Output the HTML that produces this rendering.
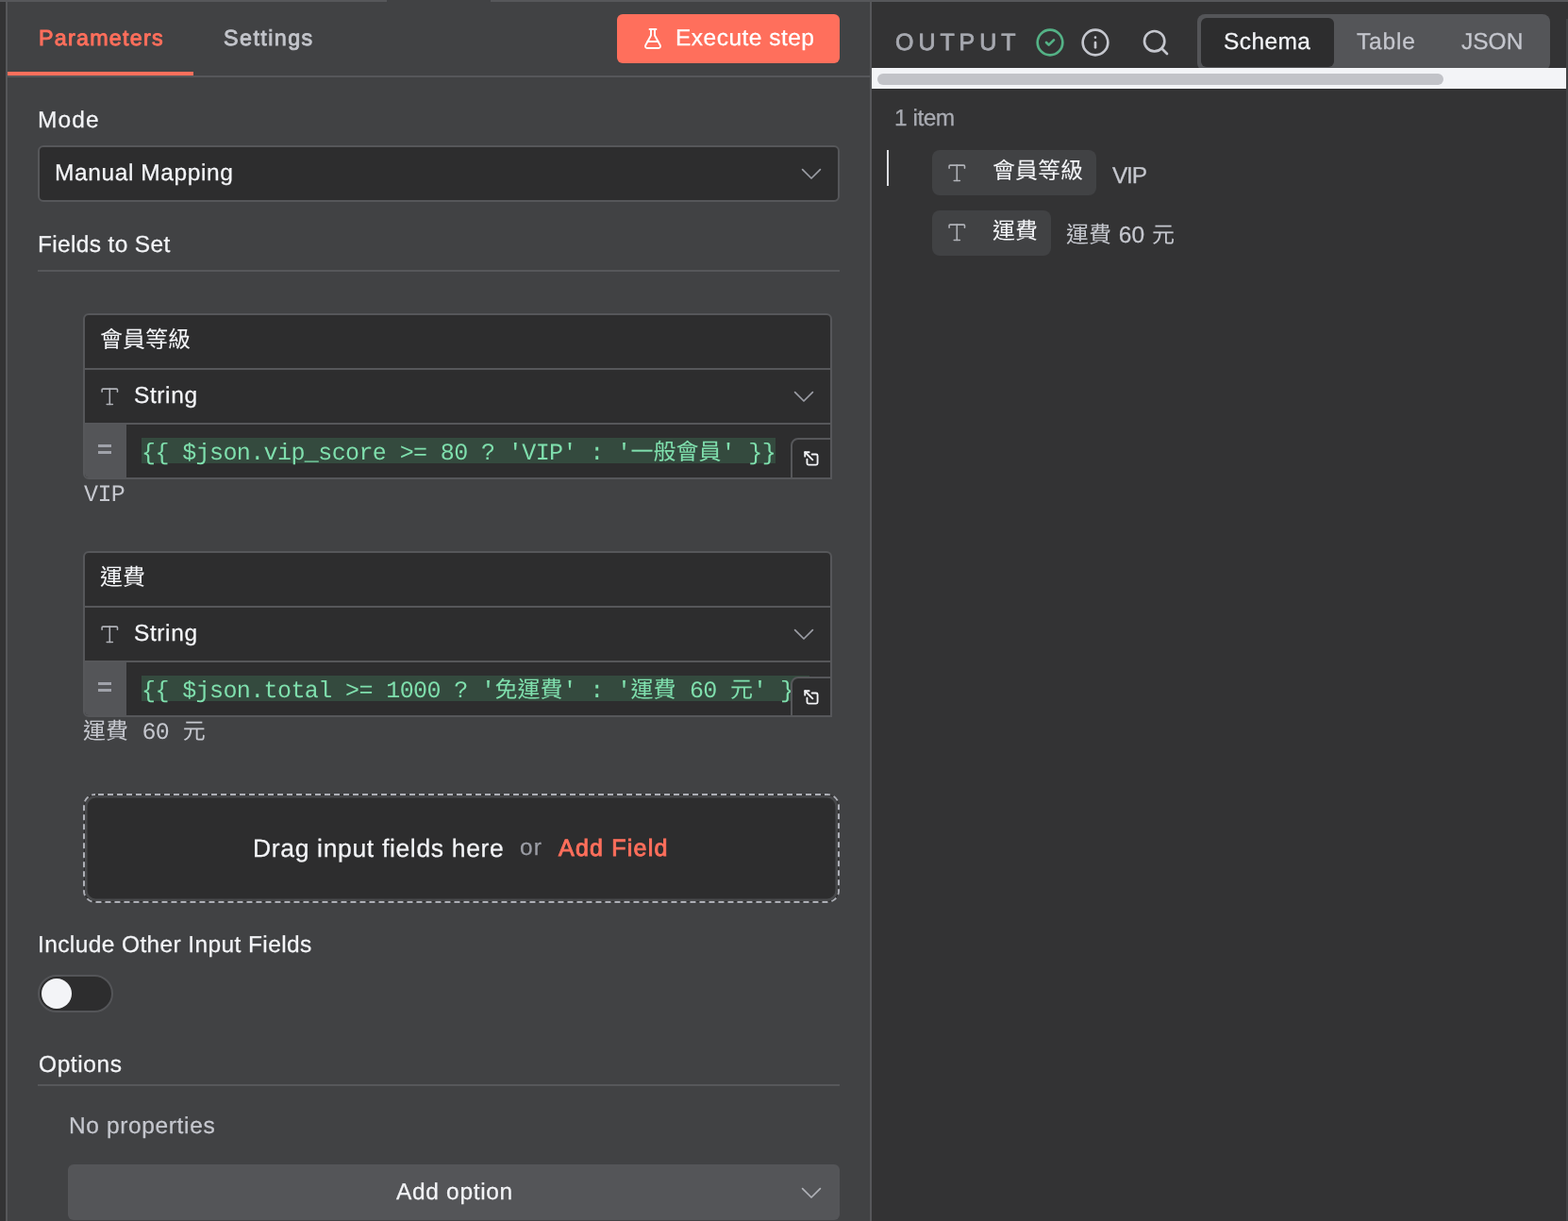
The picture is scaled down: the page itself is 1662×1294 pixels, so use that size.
<!DOCTYPE html>
<html lang="zh-Hant">
<head>
<meta charset="utf-8">
<title>Edit Fields – Parameters / Output</title>
<style>
html,body{margin:0;padding:0}
body{text-rendering:geometricPrecision;width:1662px;height:1294px;overflow:hidden;position:relative;background:#414244;font-family:"Liberation Sans",sans-serif;color:#f3f4f7}
div,svg{box-sizing:border-box}
.a{position:absolute}
.t{position:absolute;white-space:nowrap;line-height:1;will-change:transform}
.m{font-family:"Liberation Mono",monospace}
.cj{font-family:"Liberation Sans","Noto Sans CJK TC",sans-serif;font-size:24px;letter-spacing:0;-webkit-text-stroke:0;font-weight:400}
.line{position:absolute;background:#56575a}
.box{position:absolute;background:#2d2d2e;border:2px solid #56575a}
.ico{position:absolute;fill:none;stroke-linecap:round;stroke-linejoin:round;overflow:visible}
.card{position:absolute;left:88px;width:794px;height:176px;background:#2d2d2e;border:2px solid #56575a;border-radius:6px 6px 0 6px;overflow:hidden}
.card .sep{position:absolute;left:0;width:790px;height:2px;background:#56575a}
.card .eq{position:absolute;left:0;top:116px;width:44px;height:56px;background:#545558}
.card .eq i{position:absolute;left:14px;width:14px;height:3px;background:#a0a2aa}
.card .hl{position:absolute;left:60px;top:130px;height:27px;background:#344a3e;color:#7fdfad;font-family:"Liberation Mono",monospace;white-space:pre;will-change:transform;line-height:31px;font-size:25px;letter-spacing:-0.6px}
.card .exp{position:absolute;left:748px;top:130px;width:46px;height:46px;background:#2d2d2e;border:2px solid #56575a;border-top-left-radius:8px}
.pill{position:absolute;left:988px;height:48px;background:#414244;border-radius:8px}
</style>
</head>
<body>


<!-- ===== window chrome ===== -->
<div class="line" style="left:0;top:0;width:410px;height:2px"></div>
<div class="line" style="left:520px;top:0;width:1142px;height:2px"></div>
<div class="a" style="left:0;top:2px;width:6px;height:1292px;background:#333334"></div>
<div class="line" style="left:6px;top:2px;width:2px;height:1292px"></div>

<!-- ===== parameters panel ===== -->
<div class="a" style="left:8px;top:76px;width:197px;height:4px;background:#ff6f5c"></div>
<div class="line" style="left:8px;top:80px;width:914px;height:2px"></div>
<div id="parameters" class="t" style="left:40.5px;top:29.28px;font-size:23.3px;color:#ff6f5c;font-weight:400;letter-spacing:1.24px;-webkit-text-stroke:0.9px #ff6f5c;">Parameters</div>
<div id="settings" class="t" style="left:236.9px;top:29.28px;font-size:23.3px;color:#c3c5cb;font-weight:400;letter-spacing:1.44px;-webkit-text-stroke:0.85px #c3c5cb;">Settings</div>

<div class="a" style="left:654px;top:15px;width:236px;height:52px;border-radius:6px;background:#ff6f5c"></div>
<svg class="ico" style="left:680px;top:29px;stroke:#fff;stroke-width:1.9" width="24" height="24" viewBox="0 0 24 24"><path d="M14 2v6a2 2 0 0 0 .245.96l5.51 10.08A2 2 0 0 1 18 22H6a2 2 0 0 1-1.755-2.96l5.51-10.08A2 2 0 0 0 10 8V2"/><path d="M6.453 15h11.094"/><path d="M8.5 2h7"/></svg>
<div id="execute" class="t" style="left:716px;top:28.66px;font-size:24.5px;color:#ffffff;letter-spacing:0.48px;-webkit-text-stroke:0.25px #ffffff;">Execute step</div>

<div id="mode" class="t" style="left:39.8px;top:116.26px;font-size:24.5px;color:#f3f4f7;letter-spacing:1.14px;-webkit-text-stroke:0.25px #f3f4f7;">Mode</div>
<div class="box" style="left:40px;top:154px;width:850px;height:60px;border-radius:6px"></div>
<div id="manual" class="t" style="left:57.8px;top:172.26px;font-size:24.5px;color:#f3f4f7;letter-spacing:0.6px;-webkit-text-stroke:0.25px #f3f4f7;">Manual Mapping</div>
<svg class="ico" style="left:848px;top:176px;stroke:#9b9da5;stroke-width:1.7" width="24" height="16" viewBox="0 0 24 16"><path d="M2.6 3.6 12 13 21.4 3.6"/></svg>

<div id="fields" class="t" style="left:39.8px;top:248.46px;font-size:24.5px;color:#f3f4f7;letter-spacing:0.34px;-webkit-text-stroke:0.25px #f3f4f7;">Fields to Set</div>
<div class="line" style="left:40px;top:286px;width:850px;height:2px"></div>

<!-- field 1 -->
<div class="card" style="top:332px">
  <div class="sep" style="top:56px"></div>
  <div class="sep" style="top:114px"></div>
  <div class="eq"><i style="top:21px"></i><i style="top:28px"></i></div>
  <div class="hl" style="width:672px">{{ $json.vip_score &gt;= 80 ? 'VIP' : '<span class="cj">一般會員</span>' }}</div>
  <div class="exp"></div>
</div>
<div class="t" style="left:106px;top:349px;color:#f3f4f7"><span class="cj">會員等級</span></div>
<svg class="ico" style="left:103.5px;top:407.7px;stroke:#b0b2b8;stroke-width:1.55" width="24.6" height="24.6" viewBox="0 0 24 24"><path d="M12 4v16"/><path d="M4 7V5a1 1 0 0 1 1-1h14a1 1 0 0 1 1 1v2"/><path d="M9 20h6"/></svg>
<div id="string1" class="t" style="left:142px;top:408.46px;font-size:24.5px;color:#f3f4f7;letter-spacing:0.6px;-webkit-text-stroke:0.25px #f3f4f7;">String</div>
<svg class="ico" style="left:840px;top:412px;stroke:#9b9da5;stroke-width:1.7" width="24" height="16" viewBox="0 0 24 16"><path d="M2.6 3.6 12 13 21.4 3.6"/></svg>
<svg class="ico" style="left:850.95px;top:476.85px;stroke:#f3f4f7;stroke-width:2.5" width="17.8" height="17.8" viewBox="0 0 24 24"><g transform="rotate(-90 12 12)"><path d="M15 3h6v6"/><path d="M10 14 21 3"/><path d="M18 13v6a2 2 0 0 1-2 2H5a2 2 0 0 1-2-2V8a2 2 0 0 1 2-2h6"/></g></svg>
<div id="vipres" class="t m" style="left:88.5px;top:512px;font-size:25px;color:#c5c7ce;letter-spacing:-0.6px;">VIP</div>

<!-- field 2 -->
<div class="card" style="top:584px">
  <div class="sep" style="top:56px"></div>
  <div class="sep" style="top:114px"></div>
  <div class="eq"><i style="top:21px"></i><i style="top:28px"></i></div>
  <div class="hl" style="width:708px">{{ $json.total &gt;= 1000 ? '<span class="cj">免運費</span>' : '<span class="cj">運費</span> 60 <span class="cj">元</span>' }}</div>
  <div class="exp" style="top:131px;height:45px"></div>
</div>
<div class="t" style="left:106px;top:601px;color:#f3f4f7"><span class="cj">運費</span></div>
<svg class="ico" style="left:103.5px;top:659.7px;stroke:#b0b2b8;stroke-width:1.55" width="24.6" height="24.6" viewBox="0 0 24 24"><path d="M12 4v16"/><path d="M4 7V5a1 1 0 0 1 1-1h14a1 1 0 0 1 1 1v2"/><path d="M9 20h6"/></svg>
<div id="string2" class="t" style="left:142px;top:660.46px;font-size:24.5px;color:#f3f4f7;letter-spacing:0.6px;-webkit-text-stroke:0.25px #f3f4f7;">String</div>
<svg class="ico" style="left:840px;top:664px;stroke:#9b9da5;stroke-width:1.7" width="24" height="16" viewBox="0 0 24 16"><path d="M2.6 3.6 12 13 21.4 3.6"/></svg>
<svg class="ico" style="left:850.95px;top:729.95px;stroke:#f3f4f7;stroke-width:2.5" width="17.8" height="17.8" viewBox="0 0 24 24"><g transform="rotate(-90 12 12)"><path d="M15 3h6v6"/><path d="M10 14 21 3"/><path d="M18 13v6a2 2 0 0 1-2 2H5a2 2 0 0 1-2-2V8a2 2 0 0 1 2-2h6"/></g></svg>
<div id="feeres" class="t m" style="left:88px;top:764px;font-size:25px;color:#c5c7ce;letter-spacing:-0.6px;"><span class="cj">運費</span> 60 <span class="cj">元</span></div>

<!-- drop zone -->
<svg class="a" style="left:88px;top:841px" width="802" height="116" viewBox="0 0 802 116"><rect x="1" y="1" width="800" height="114" rx="12" ry="12" fill="#2d2d2e" stroke="#adafb6" stroke-width="2" stroke-dasharray="6 4" stroke-dashoffset="7"/><rect x="3.3" y="3.3" width="795.4" height="109.4" rx="10" ry="10" fill="#2d2d2e" stroke="#47484a" stroke-width="2.6"/></svg>
<div id="drag" class="t" style="left:268px;top:885.57px;font-size:26.5px;color:#f3f4f7;letter-spacing:0.66px;-webkit-text-stroke:0.25px #f3f4f7;">Drag input fields here</div>
<div id="or" class="t" style="left:550.8px;top:887.26px;font-size:24.5px;color:#9b9da5;letter-spacing:1px;-webkit-text-stroke:0.25px #9b9da5;">or</div>
<div id="addfield" class="t" style="left:592.2px;top:886.84px;font-size:25px;color:#ff6f5c;font-weight:400;letter-spacing:1.22px;-webkit-text-stroke:0.9px #ff6f5c;">Add Field</div>

<div id="include" class="t" style="left:40.4px;top:990.26px;font-size:24.5px;color:#f3f4f7;letter-spacing:0.39px;-webkit-text-stroke:0.25px #f3f4f7;">Include Other Input Fields</div>
<div class="a" style="left:40px;top:1033px;width:80px;height:40px;border-radius:20px;background:#2d2d2e;border:2px solid #545558"></div>
<div class="a" style="left:44px;top:1037px;width:32px;height:32px;border-radius:16px;background:#f3f4f7"></div>

<div id="options" class="t" style="left:40.8px;top:1116.86px;font-size:24.5px;color:#f3f4f7;letter-spacing:0.59px;-webkit-text-stroke:0.25px #f3f4f7;">Options</div>
<div class="line" style="left:40px;top:1149px;width:850px;height:2px"></div>
<div id="noprops" class="t" style="left:72.6px;top:1181.51px;font-size:24.5px;color:#c5c7ce;letter-spacing:0.63px;-webkit-text-stroke:0.25px #c5c7ce;">No properties</div>
<div class="a" style="left:72px;top:1234px;width:818px;height:59px;border-radius:6px;background:#545558"></div>
<div id="addoption" class="t" style="left:420px;top:1252.26px;font-size:24.5px;color:#f3f4f7;letter-spacing:0.67px;-webkit-text-stroke:0.25px #f3f4f7;">Add option</div>
<svg class="ico" style="left:848px;top:1256px;stroke:#b0b2b8;stroke-width:1.7" width="24" height="16" viewBox="0 0 24 16"><path d="M2.6 3.6 12 13 21.4 3.6"/></svg>

<!-- ===== output panel ===== -->
<div class="line" style="left:922px;top:2px;width:2px;height:1292px"></div>
<div class="a" style="left:924px;top:2px;width:738px;height:1292px;background:#333334"></div>
<div class="a" style="left:1660px;top:20px;width:2px;height:1274px;background:#414244"></div>
<div id="output" class="t" style="left:948.75px;top:33.24px;font-size:25px;color:#a7a9b0;font-weight:400;letter-spacing:4.95px;-webkit-text-stroke:0.8px #a7a9b0;">OUTPUT</div>
<svg class="ico" style="left:1097px;top:29px;stroke:#54b286;stroke-width:2" width="32" height="32" viewBox="0 0 24 24"><circle cx="12" cy="12" r="10"/><path d="m9 12 2 2 4-4"/></svg>
<svg class="ico" style="left:1145px;top:29px;stroke:#c5c7ce;stroke-width:2" width="32" height="32" viewBox="0 0 24 24"><circle cx="12" cy="12" r="10"/><path d="M12 16v-4"/><path d="M12 8h.01"/></svg>
<svg class="ico" style="left:1209.1px;top:28.6px;stroke:#c5c7ce;stroke-width:2" width="32" height="32" viewBox="0 0 24 24"><circle cx="11" cy="11" r="8"/><path d="m21 21-4.3-4.3"/></svg>

<div class="a" style="left:1269px;top:15px;width:374px;height:60px;border-radius:8px;background:#545558"></div>
<div class="a" style="left:1273px;top:19px;width:141px;height:52px;border-radius:6px;background:#2d2d2e"></div>
<div id="schema" class="t" style="left:1297px;top:33.26px;font-size:24.5px;color:#f3f4f7;letter-spacing:0.4px;-webkit-text-stroke:0.25px #f3f4f7;">Schema</div>
<div id="table" class="t" style="left:1438px;top:33.26px;font-size:24.5px;color:#c5c7ce;letter-spacing:0.85px;-webkit-text-stroke:0.25px #c5c7ce;">Table</div>
<div id="json" class="t" style="left:1549px;top:33.26px;font-size:24.5px;color:#c5c7ce;-webkit-text-stroke:0.25px #c5c7ce;">JSON</div>

<div class="a" style="left:924px;top:72px;width:736px;height:22px;background:#f3f4f7"></div>
<div class="a" style="left:930px;top:78px;width:600px;height:11.5px;border-radius:6px;background:#c2c3c8"></div>

<div id="item" class="t" style="left:947.5px;top:114.01px;font-size:24.5px;color:#a9abb2;letter-spacing:-0.5px;-webkit-text-stroke:0.25px #a9abb2;">1 item</div>
<div class="a" style="left:940px;top:159px;width:2px;height:38px;background:#dcdde1"></div>

<div class="pill" style="top:159px;width:174px"></div>
<svg class="ico" style="left:1001.7px;top:170.5px;stroke:#b0b2b8;stroke-width:1.55" width="24.6" height="24.6" viewBox="0 0 24 24"><path d="M12 4v16"/><path d="M4 7V5a1 1 0 0 1 1-1h14a1 1 0 0 1 1 1v2"/><path d="M9 20h6"/></svg>
<div class="t" style="left:1052px;top:170px;color:#f3f4f7"><span class="cj">會員等級</span></div>
<div id="vipout" class="t" style="left:1179px;top:174.76px;font-size:24.5px;color:#c5c7ce;letter-spacing:-1.25px;-webkit-text-stroke:0.25px #c5c7ce;">VIP</div>

<div class="pill" style="top:222.5px;width:126px"></div>
<svg class="ico" style="left:1001.7px;top:234.1px;stroke:#b0b2b8;stroke-width:1.55" width="24.6" height="24.6" viewBox="0 0 24 24"><path d="M12 4v16"/><path d="M4 7V5a1 1 0 0 1 1-1h14a1 1 0 0 1 1 1v2"/><path d="M9 20h6"/></svg>
<div class="t" style="left:1052px;top:234px;color:#f3f4f7"><span class="cj">運費</span></div>
<div id="feeout" class="t" style="left:1130.2px;top:238.26px;font-size:24.5px;color:#c5c7ce;-webkit-text-stroke:0.25px #c5c7ce;"><span class="cj">運費</span><span style="margin:0 1px">&nbsp;60&nbsp;</span><span class="cj">元</span></div>

</body>
</html>
